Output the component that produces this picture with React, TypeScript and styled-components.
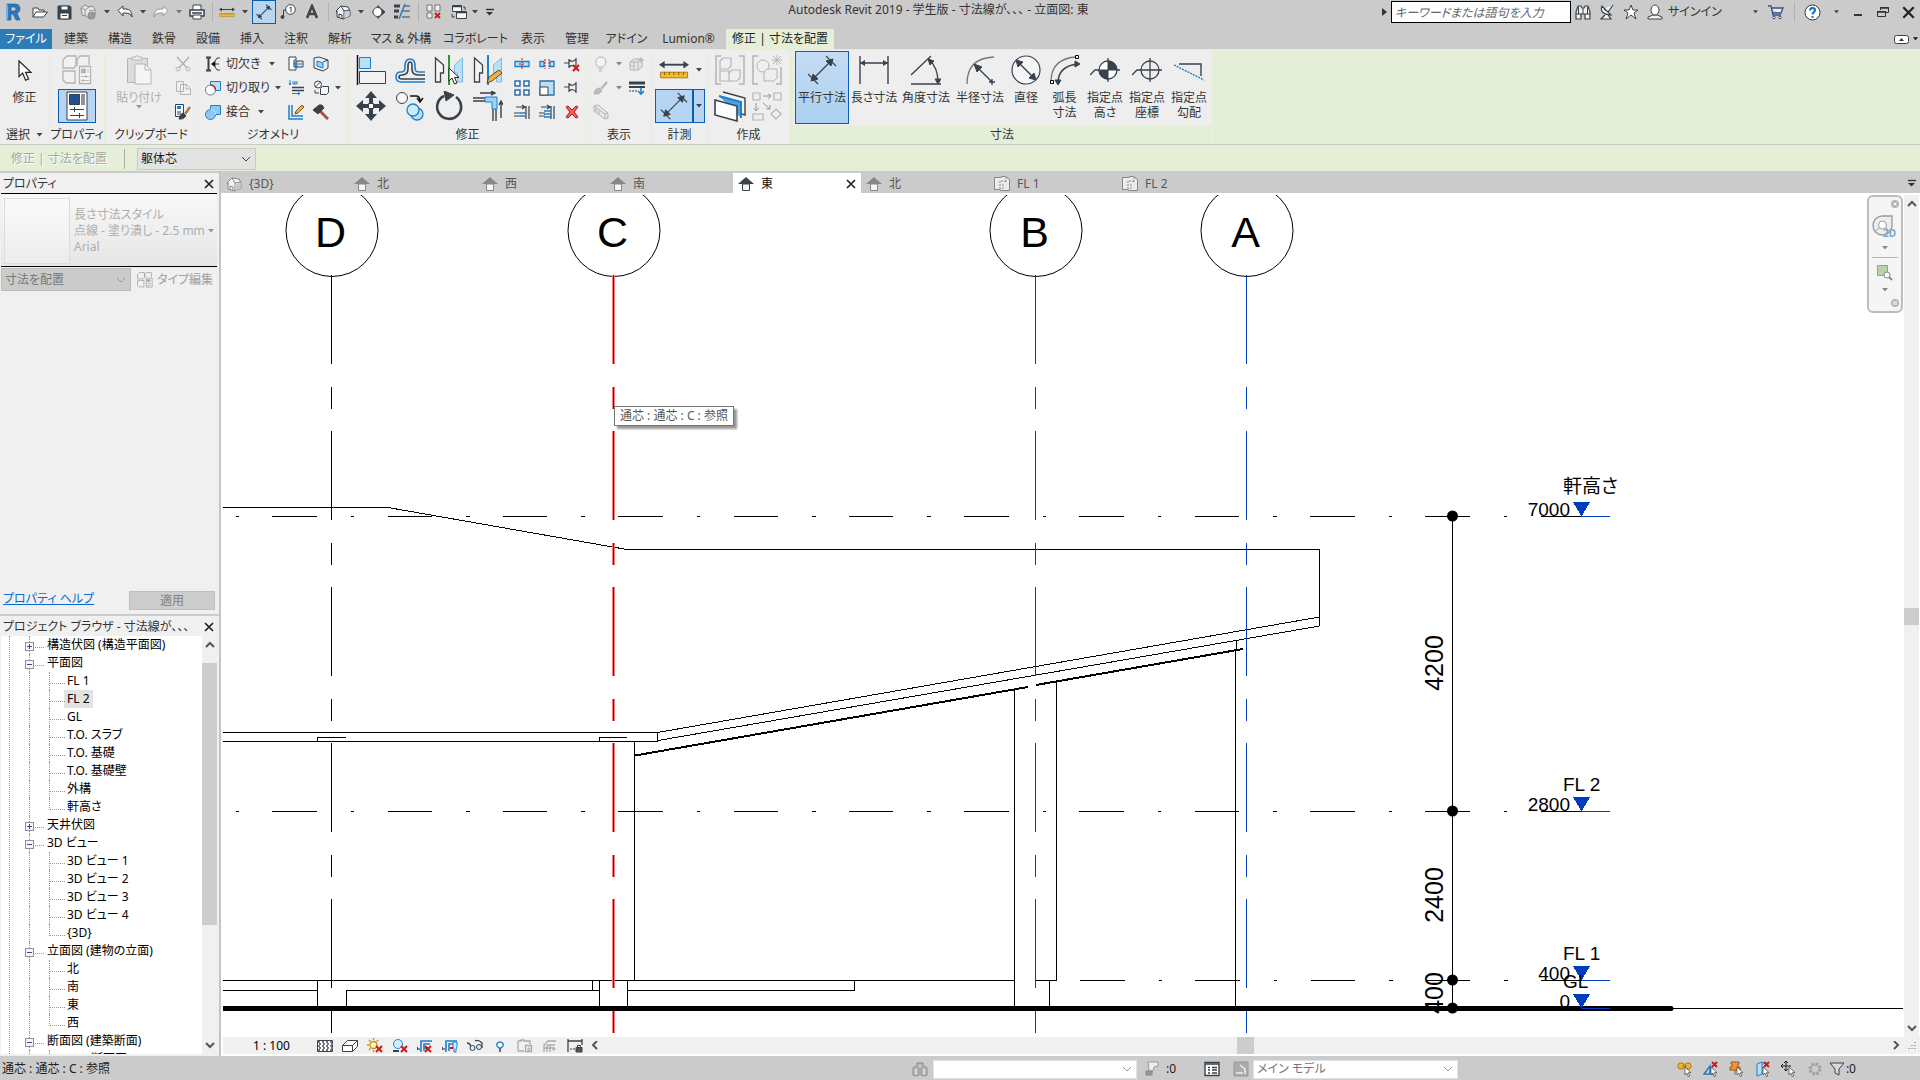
import React from "react";
import styled, { createGlobalStyle, css } from "styled-components";

const INK = "#38424d";
const BLUE = "#1c7fd0";
const SKY = "#b9e0f5";
const GREY = "#b4b4b4";
const GREEN = "#e5efd8";
const BAR = "#cbcbcb";
const RED = "#d01818";

const Global = createGlobalStyle`
  * { box-sizing: border-box; }
  html, body { margin: 0; height: 100%; }
  body {
    background: ${BAR};
    color: #333;
    font-family: "Noto Sans", "Noto Sans CJK JP", sans-serif;
    font-feature-settings: "palt";
    font-size: 12px;
    line-height: 16px;
    overflow: hidden;
  }
  button, input, select {
    font: inherit;
    font-feature-settings: inherit;
    color: inherit;
    margin: 0;
    padding: 0;
    border: 0;
    border-radius: 0;
    background: none;
    outline: none;
  }
  svg { display: block; flex: none; }
`;

/* ---------- layout ---------- */

const Page = styled.div`
  display: flex;
  flex-direction: column;
  height: 100vh;
`;

const TitleBar = styled.header`
  display: flex;
  height: 24px;
  margin-bottom: 5px;
  flex: none;
`;

const AppTitle = styled.h1`
  flex: 1;
  margin: 0;
  font-size: 12px;
  line-height: 20px;
  font-weight: 400;
  text-align: center;
  white-space: nowrap;
  overflow: hidden;
`;

const Slot = styled.button<{ $w: number; $on?: boolean }>`
  flex: none;
  width: ${(p) => p.$w}px;
  display: flex;
  align-items: center;
  justify-content: center;
  ${(p) =>
    p.$on &&
    css`
      background: #b7d6f2;
      border: 1px solid #0a5fb4;
      margin-left: 2px;
    `}
`;

const BarRule = styled.span<{ $w: number }>`
  flex: none;
  width: ${(p) => p.$w}px;
  display: flex;
  justify-content: center;
  padding: 2px 0;
  &::before {
    content: "";
    width: 1px;
    background: #b2b2b2;
  }
`;

const Search = styled.input`
  width: 180px;
  height: 22px;
  margin: 1px 0 0 2px;
  padding: 0 3px;
  background: #fff;
  border: 1px solid #000;
  font-style: italic;
  &::placeholder {
    color: #666;
    opacity: 1;
  }
`;

const SignIn = styled.button`
  width: 105px;
  display: flex;
  align-items: center;
  gap: 5px;
  padding-left: 4px;
  white-space: nowrap;
`;

const RibbonTabs = styled.nav`
  display: flex;
  height: 20px;
  flex: none;
`;

const RibbonTab = styled.button<{ $w: number; $kind?: "file" | "active" }>`
  width: ${(p) => p.$w}px;
  flex: none;
  white-space: nowrap;
  text-align: center;
  ${(p) => p.$kind === "file" && "background:#2b7cb7;color:#fff;margin-right:2px;"}
  ${(p) => p.$kind === "active" && `background:${GREEN};color:#222;margin-left:3px;`}
`;

const RibbonToggle = styled.button`
  display: flex;
  align-items: center;
  gap: 4px;
  margin-left: auto;
  padding-right: 2px;
`;

const Ribbon = styled.section`
  display: flex;
  gap: 1px;
  height: 96px;
  flex: none;
  padding-top: 1px;
  background: ${GREEN};
  border-bottom: 1px solid #c8cbc4;
`;

const Panel = styled.div<{ $w: number }>`
  width: ${(p) => p.$w}px;
  flex: none;
  display: flex;
  flex-direction: column;
  background: #eee;
`;

const ContextPanel = styled(Panel)`
  margin-left: 3px;
  border-right: 1px solid #eee;
`;

const PanelBody = styled.div<{ $pad?: number }>`
  height: 75px;
  display: flex;
  padding-left: ${(p) => p.$pad ?? 0}px;
`;

const PanelTitle = styled.div<{ $context?: boolean }>`
  height: 19px;
  line-height: 18px;
  display: flex;
  align-items: center;
  justify-content: center;
  gap: 6px;
  white-space: nowrap;
  ${(p) => p.$context && `background:${GREEN};`}
`;

const LargeGrid = styled.div<{ $cols: number; $w: number }>`
  display: grid;
  grid-template-columns: repeat(${(p) => p.$cols}, ${(p) => p.$w}px);
  grid-template-rows: 39px 34px;
`;

const SmallGrid = styled.div<{ $cols: string; $left?: number }>`
  display: grid;
  grid-template-columns: ${(p) => p.$cols};
  grid-template-rows: repeat(3, 24px);
  padding-top: 2px;
  margin-left: ${(p) => p.$left ?? 0}px;
`;

const Tool = styled.button<{ $on?: boolean }>`
  display: flex;
  align-items: center;
  justify-content: center;
  ${(p) => p.$on && "background:#b5d5f2;border:1px solid #0a5fb4;"}
`;

const LabelTool = styled.button`
  display: flex;
  align-items: center;
  gap: 5px;
  padding-left: 2px;
  white-space: nowrap;
`;

const TallTool = styled.button<{ $w: number; $on?: boolean; $off?: boolean }>`
  width: ${(p) => p.$w}px;
  height: 73px;
  margin-top: 1px;
  padding-top: 3px;
  display: flex;
  flex-direction: column;
  align-items: center;
  line-height: 15px;
  white-space: pre;
  color: ${(p) => (p.$off ? "#b0b0b0" : "inherit")};
  border: 1px solid ${(p) => (p.$on ? "#0a5fb4" : "transparent")};
  ${(p) => p.$on && "background:linear-gradient(#c4dcf4,#abd0f0);"}
  & > svg:first-child {
    margin-bottom: 5px;
  }
`;

const OptionsBar = styled.div`
  display: flex;
  align-items: center;
  height: 26px;
  flex: none;
  background: ${GREEN};
  padding: 1px 0 0 11px;
`;

const ModeLabel = styled.span`
  width: 114px;
  color: #a3a8a0;
  text-shadow: 1px 1px 0 #fff;
  border-right: 1px solid #a8ada4;
  line-height: 20px;
  margin-right: 12px;
`;

const PickBox = styled.span<{ $w: number; $bg: string; $edge: string; $h: number }>`
  position: relative;
  flex: none;
  width: ${(p) => p.$w}px;
  height: ${(p) => p.$h}px;
  background: ${(p) => p.$bg};
  border: 1px solid ${(p) => p.$edge};
  & > svg {
    position: absolute;
    right: 4px;
    top: 50%;
    margin-top: -4px;
    pointer-events: none;
  }
`;

const Pick = styled.select<{ $tone?: string }>`
  appearance: none;
  width: 100%;
  height: 100%;
  padding: 0 18px 0 3px;
  color: ${(p) => p.$tone ?? "#222"};
  opacity: 1;
`;

const Workspace = styled.div`
  flex: 1;
  min-height: 0;
  display: flex;
`;

const Side = styled.aside`
  width: 221px;
  flex: none;
  display: flex;
  flex-direction: column;
  padding-top: 2px;
  border-right: 2px solid #c4c4c4;
  background: ${BAR};
`;

const Palette = styled.section<{ $grow: number }>`
  flex: ${(p) => p.$grow} 1 0;
  min-height: 0;
  display: flex;
  flex-direction: column;
  background: #f0f0f0;
  margin-bottom: ${(p) => (p.$grow === 441 ? 2 : 0)}px;
`;

const PaletteHead = styled.h2`
  display: flex;
  align-items: center;
  justify-content: space-between;
  height: 20px;
  flex: none;
  margin: 0;
  padding: 1px 5px 0 3px;
  font-size: 12px;
  font-weight: 400;
  white-space: nowrap;
`;

const TypeCard = styled.button`
  display: flex;
  align-items: center;
  height: 74px;
  flex: none;
  margin: 0 2px 0 1px;
  padding: 4px 2px 2px 3px;
  text-align: left;
  color: #adadad;
  white-space: nowrap;
  border-top: 1px solid #000;
  border-bottom: 1px solid #000;
  background: linear-gradient(#f8f8f8, #e6e6e6);
  & > svg {
    margin-left: auto;
  }
`;

const TypeThumb = styled.span`
  width: 66px;
  height: 66px;
  margin-right: 4px;
  border: 1px solid #dcdcdc;
  background: linear-gradient(#fafafa, #ececec);
`;

const FilterRow = styled.div`
  display: flex;
  align-items: center;
  gap: 6px;
  padding: 1px 0 0 1px;
  color: #a0a0a0;
`;

const EditType = styled.button`
  display: flex;
  align-items: center;
  gap: 4px;
  white-space: nowrap;
`;

const PaletteFoot = styled.div`
  display: flex;
  justify-content: space-between;
  margin-top: auto;
  padding: 0 4px 4px 3px;
`;

const HelpLink = styled.a`
  color: #0a68d0;
  text-decoration: underline;
`;

const Apply = styled.button`
  width: 86px;
  height: 19px;
  background: #ccc;
  border: 1px solid #bfbfbf;
  color: #838383;
`;

const TreeArea = styled.div`
  flex: 1;
  min-height: 0;
  display: flex;
  margin: 0 2px 2px 1px;
  background: #fff;
`;

const Tree = styled.ul`
  flex: 1;
  margin: 0 0 0 8px;
  padding: 0;
  list-style: none;
  overflow: hidden;
  color: #000;
  border-left: 1px dotted #999;
`;

const Node = styled.li<{ $leaf?: boolean }>`
  position: relative;
  display: flex;
  align-items: center;
  height: 18px;
  white-space: nowrap;
  padding-left: ${(p) => (p.$leaf ? 54 : 34)}px;
  &::before {
    content: "";
    position: absolute;
    left: 19px;
    top: 0;
    bottom: 0;
    border-left: 1px dotted #999;
  }
  &::after {
    content: "";
    position: absolute;
    left: ${(p) => (p.$leaf ? 39 : 25)}px;
    width: ${(p) => (p.$leaf ? 15 : 9)}px;
    top: 0;
    height: 11px;
    border-bottom: 1px dotted #999;
    ${(p) => p.$leaf && "border-left:1px dotted #999;"}
  }
`;

const Rail = styled.span`
  position: absolute;
  left: 39px;
  top: 11px;
  height: 7px;
  border-left: 1px dotted #999;
`;

const NodeName = styled.span<{ $on?: boolean }>`
  padding: 0 3px;
  line-height: 18px;
  background: ${(p) => (p.$on ? "#e2e2e2" : "transparent")};
`;

const Expander = styled.button`
  position: absolute;
  z-index: 1;
  left: 15px;
  top: 6px;
  width: 9px;
  height: 9px;
  background: #f7f7f7;
  border: 1px solid #919191;
`;

const Scroll = styled.div<{ $dir: "row" | "column"; $before: number; $thumb: number; $after: number }>`
  display: flex;
  flex: ${(p) => (p.$dir === "row" ? "1" : "none")};
  flex-direction: ${(p) => p.$dir};
  align-items: center;
  background: #f0f0f0;
  ${(p) => p.$dir === "column" && "width:15px;"}
  &::before {
    content: "";
    order: 1;
    flex: ${(p) => p.$before} 1 0;
  }
  &::after {
    content: "";
    order: 3;
    flex: ${(p) => p.$after} 1 0;
  }
  & > i {
    order: 2;
    background: #cdcdcd;
    align-self: stretch;
    flex: ${(p) => p.$thumb} 1 0;
  }
  & > button:last-child {
    order: 4;
  }
`;

const Arrow = styled.button`
  width: 15px;
  height: 17px;
  display: flex;
  align-items: center;
  justify-content: center;
`;

const Main = styled.main`
  flex: 1;
  min-width: 0;
  display: flex;
  flex-direction: column;
`;

const DocTabs = styled.nav`
  display: flex;
  height: 22px;
  flex: none;
  padding-top: 2px;
`;

const DocTab = styled.button<{ $on?: boolean }>`
  width: 128px;
  display: flex;
  align-items: center;
  gap: 7px;
  padding: 1px 5px 0 5px;
  color: ${(p) => (p.$on ? "#111" : "#555")};
  background: ${(p) => (p.$on ? "#fff" : "transparent")};
  & > svg:nth-of-type(2) {
    margin-left: auto;
  }
`;

const TabMenu = styled.button`
  margin-left: auto;
  padding-right: 4px;
`;

const ViewRow = styled.div`
  flex: 1;
  min-height: 0;
  display: flex;
  background: #fff;
  padding: 2px 1px 0 2px;
`;

const Canvas = styled.div`
  position: relative;
  flex: 1;
  min-width: 0;
  overflow: hidden;
  & > svg {
    width: 100%;
    height: 100%;
  }
`;

const Tip = styled.div`
  position: absolute;
  left: 391px;
  top: 211px;
  height: 20px;
  padding: 0 5px;
  line-height: 17px;
  background: #fff;
  border: 1px solid #767676;
  box-shadow: 3px 3px 2px #999;
  color: #575757;
  white-space: nowrap;
`;

const NavBar = styled.div`
  position: absolute;
  right: 1px;
  top: 0;
  width: 36px;
  height: 118px;
  display: flex;
  flex-direction: column;
  align-items: center;
  justify-content: space-between;
  padding: 3px 2px 4px;
  background: #f5f5f5;
  border: 2px solid #bdbdbd;
  border-radius: 6px;
  & > button:first-child,
  & > button:last-child {
    align-self: flex-end;
  }
  & > hr {
    width: 26px;
    margin: 0;
    border: 0;
    border-top: 1px solid #b5b5b5;
  }
`;

const ViewBar = styled.div`
  display: flex;
  height: 19px;
  flex: none;
  background: #f0f0f0;
  border-bottom: 2px solid #fff;
  border-left: 2px solid #fff;
`;

const Scale = styled.button`
  width: 89px;
  padding-left: 8px;
  color: #000;
  white-space: pre;
`;

const StatusBar = styled.footer`
  display: flex;
  align-items: center;
  height: 24px;
  flex: none;
  padding: 2px 64px 0 2px;
  color: #222;
`;

const StatusText = styled.span`
  width: 896px;
  flex: 0 1 auto;
  min-width: 120px;
  white-space: pre;
`;

const Push = styled.span`
  flex: 1;
`;

const Count = styled.span`
  flex: none;
  width: 30px;
`;

/* ---------- icons ---------- */

type IcProps = { w?: number; h?: number; vb?: string; children: React.ReactNode };
const Ic = ({ w = 16, h = w, vb, children }: IcProps) => (
  <svg width={w} height={h} viewBox={vb ?? `0 0 ${w} ${h}`} fill="none" stroke={INK} strokeWidth="1" aria-hidden="true">
    {children}
  </svg>
);

const Caret = ({ c = "#444", w = 6 }: { c?: string; w?: number }) => (
  <svg width={w} height={4} viewBox="0 0 6 4" aria-hidden="true">
    <path d="M0 0h6L3 3.5z" fill={c} />
  </svg>
);
const Chevron = ({ dir = "down", c = "#555" }: { dir?: "down" | "up" | "left" | "right"; c?: string }) => {
  const d = { down: "M1 2l4 4 4-4", up: "M1 7l4-4 4 4", left: "M7 0L3 4l4 4", right: "M3 0l4 4-4 4" }[dir];
  return (
    <svg width="10" height="9" viewBox="0 0 10 9" fill="none" stroke={c} strokeWidth={c === "#555" ? 2 : 1} aria-hidden="true">
      <path d={d} />
    </svg>
  );
};
const Cross = ({ s = 10 }: { s?: number }) => (
  <Ic w={s} vb="0 0 10 10">
    <path d="M1 1l8 8M9 1L1 9" stroke="#222" strokeWidth="1.7" />
  </Ic>
);
const MenuCaret = () => (
  <Ic w={9} h={8}>
    <path d="M1 1.500h8" stroke="#333" strokeWidth="1.400" />
    <path d="M1 4h7L4.500 7.500z" fill="#333" stroke="none" />
  </Ic>
);
const Cursor = ({ x = 0, y = 0, k = 1 }: { x?: number; y?: number; k?: number }) => (
  <path transform={`translate(${x} ${y}) scale(${k})`} d="M0 0v13l3-3 2.500 6 2.500-1-2.500-5.500h4.500z" fill="#fff" stroke="#222" />
);
const RedX = ({ x, y, s = 6 }: { x: number; y: number; s?: number }) => (
  <path d={`M${x} ${y}l${s} ${s}M${x + s} ${y}l${-s} ${s}`} stroke={RED} strokeWidth="2" />
);

const Logo = () => (
  <Ic w={16} h={18}>
    <path d="M2 1h8q5 0 5 5 0 3-3 4l3 7h-4l-3-6H6v6H2z M6 4v4h3q2 0 2-2t-2-2z" fill="#2f78bd" fillRule="evenodd" stroke="#1b5590" strokeWidth=".6" />
    <path d="M2 1l-1 2v14l2-1V3z" fill="#6fb2e6" stroke="none" />
  </Ic>
);
const OpenI = () => (
  <Ic>
    <path d="M1 13V4h5l1 2h5v2" fill="#f4f4f4" />
    <path d="M1 13l3-5h11.500l-4 5z" fill="#fff" />
  </Ic>
);
const SaveI = () => (
  <Ic w={15}>
    <path d="M1 1h12l1 1v12H1z" fill={INK} />
    <path d="M4 1h7v4H4zM3 8h9v6H3z" fill="#fff" />
    <path d="M5 10.500h5" />
  </Ic>
);
const SyncI = () => (
  <Ic>
    <path d="M1 4l4-3 4 2 3-1 3 3v6l-5 4-4-3-4-1z" fill="#e4e4e4" stroke="#8b8b8b" />
    <path d="M1 4l4 2 4-3M5 6v6M9 6l3 1 3-2" stroke="#999" />
    <circle cx="11.500" cy="11.500" r="3.500" fill="#9c9c9c" stroke="#888" />
  </Ic>
);
const UndoI = ({ c = INK, flip = false }: { c?: string; flip?: boolean }) => (
  <Ic>
    <path transform={flip ? "matrix(-1 0 0 1 16 0)" : undefined} d="M1 6.500L6 2v3h3q6 0 6 8-1-4-6-4H6v3z" fill="#fafafa" stroke={c} />
  </Ic>
);
const PrintI = () => (
  <Ic>
    <path d="M4 6V1h8v5" fill="#fff" />
    <path d="M1 6h14v6H1z" fill="#f7f7f7" strokeWidth="1.500" />
    <path d="M4 11h8v4H4z" fill="#fff" />
    <path d="M3 9h10" strokeWidth="1.500" />
  </Ic>
);
const MeasureI = ({ w = 16 }: { w?: number }) => (
  <Ic w={w} h={w * 0.625} vb="0 0 32 20">
    <path d="M2 5h28" strokeWidth="2" />
    <path d="M0 5l6-4v8zM32 5l-6-4v8z" fill={INK} stroke="none" />
    <path d="M1.500 13h29v6h-29z" fill="#f3bb2c" stroke="#a87a10" />
    <path d="M6 13v3M11 13v3M16 13v3M21 13v3M26 13v3" stroke="#7a5607" />
  </Ic>
);
const AlignedI = ({ w = 30 }: { w?: number }) => (
  <Ic w={w} vb="0 0 30 30">
    <path d="M5 25L25 5M1 19l10 10M19 1l10 10" strokeWidth={w < 20 ? 2 : 1.2} />
    <path d="M4 26l2-7 5 5zM26 4l-2 7-5-5z" fill={INK} stroke={INK} />
  </Ic>
);
const TagI = () => (
  <Ic>
    <circle cx="10.500" cy="5.500" r="4.800" fill="#fff" />
    <path d="M9.500 4l1.500-1v5.500M6 6H3.500v7" />
    <circle cx="2.500" cy="13" r="1.500" fill={INK} />
  </Ic>
);
const TextI = () => (
  <Ic>
    <path d="M3 14L8 2l5 12M4.500 10h7" stroke="#444" strokeWidth="2.600" />
  </Ic>
);
const HouseI = ({ c = INK }: { c?: string }) => (
  <Ic>
    <path d="M1 7l5-5 7 1 2 4v5l-7 3-6-2V8z" fill="#f3f3f3" stroke={c} />
    <path d="M6 2l3 5v8M9 7l6-1M1 7l2 1M4 14v-4l3 1v4" stroke={c} />
    <path d="M9.500 8l5-1.500V12l-5 2.500z" fill="#c8cdd2" stroke="none" />
  </Ic>
);
const SectionI = () => (
  <Ic>
    <path d="M8 1v14M2 8h13" strokeWidth=".8" />
    <path d="M8 2l7 6-7 6z" fill={INK} />
    <circle cx="7.500" cy="8" r="4.500" fill="#fff" />
  </Ic>
);
const ThinI = () => (
  <Ic>
    <path d="M0 2h6M0 7h5M0 13h4" strokeWidth="3" />
    <path d="M10 2h6M9 7h7M8 13h8" strokeWidth="1" />
    <path d="M11 0L5 15" stroke={BLUE} strokeWidth="1.500" />
  </Ic>
);
const CloseWinI = () => (
  <Ic>
    <path d="M1 1h5v6H1zM1 9h5v5H1zM9 1h5v6H9z" fill="#f0f0f0" stroke="#777" />
    <RedX x={9} y={9} s={5} />
  </Ic>
);
const SwitchI = () => (
  <Ic>
    <path d="M1.500 1.500h9v6h-9zM5.500 7.500h10v7h-10z" fill="#f8f8f8" />
    <path d="M2 2.500h9M6 8.500h9" strokeWidth="1.500" />
    <path d="M12 3h2v3M1 10v3h3" />
  </Ic>
);
const BinocularsI = () => (
  <Ic>
    <path d="M1 15V8l2-6h3l1 2h2l1-2h3l2 6v7h-5v-5H6v5z" fill="#f0f0f0" strokeWidth="1.200" />
    <path d="M1 10h5M10 10h5M8 4v6M3.500 3v7M12.500 3v7" />
  </Ic>
);
const DishI = () => (
  <Ic>
    <path d="M3 2Q0 10 12 11zM5 5l4 3 5-7M6 11l-4 4h10l-3-4" fill="#f5f5f5" strokeWidth="1.200" />
  </Ic>
);
const StarI = () => (
  <Ic>
    <path d="M8 1l2 5h5l-4 3 2 6-5-4-5 4 2-6-4-3h5z" fill="#fff" />
  </Ic>
);
const UserI = () => (
  <Ic>
    <path d="M1 15v-2l5-2h4l5 2v2z" fill="#f5f5f5" />
    <ellipse cx="8" cy="6" rx="4" ry="5" fill="#fff" />
  </Ic>
);
const CartI = () => (
  <Ic>
    <path d="M0 2h3l2 9h8M4 4h11l-2 5H5" stroke="#35507e" fill="#e8edf5" strokeWidth="1.300" />
    <circle cx="6" cy="13.500" r="1.300" fill="#fff" stroke="#35507e" />
    <circle cx="12" cy="13.500" r="1.300" fill="#fff" stroke="#35507e" />
  </Ic>
);
const HelpI = () => (
  <Ic w={17}>
    <circle cx="8.500" cy="8.500" r="7.500" fill="#fff" stroke="#333" />
    <path d="M6 6.500q0-2.500 2.500-2.500T11 6.300q0 1.200-1.300 2-1.200.7-1.200 2.200M8.500 12v1.800" stroke="#1367bd" strokeWidth="2" />
  </Ic>
);
const PropsBoxes = ({ c = GREY, w = 30 }: { c?: string; w?: number }) => (
  <Ic w={w} vb="0 0 30 30">
    <path d="M1 5l4-4h9v9l-2 3H1zM15 5l3-4h9v9M15 5v6M1 16h12v12H4l-3-3z" fill="#f1f1f1" stroke={c} strokeWidth="1.300" />
    <path d="M17.500 11.500h11v17h-11z" fill="#f8f8f8" stroke={c} strokeWidth="1.300" />
    <path d="M19.500 14h4v4h-4zM26 14v4" fill={c} stroke={c} />
    <path d="M19 21.500h8M19 25.500h8M24 20v3M21 24v3" stroke={c} />
  </Ic>
);
const PropsSheet = () => (
  <Ic w={22} h={30}>
    <path d="M1 1h20v28H1z" fill="#fff" />
    <path d="M3.500 3.500h10v10h-10z" fill="#234f8c" />
    <path d="M15 3h4v11h-4z" fill="#8d949c" stroke="none" />
    <path d="M4 18.500h14M4 24.500h14M8.500 16v5M13.500 22v5" />
  </Ic>
);
const PasteI = () => (
  <Ic w={26} h={30}>
    <path d="M1.500 3.500h20v24h-20z" fill="#dcdcdc" stroke={GREY} />
    <path d="M6 5V2h3q2-3 4 0h3v3z" fill="#eee" stroke={GREY} />
    <path d="M9 9h10l6 6v14H9z" fill="#f5f5f5" stroke={GREY} />
    <path d="M19 9v6h6" stroke={GREY} />
  </Ic>
);
const CutI = () => (
  <Ic>
    <path d="M2 1l10 11M14 1L4 12" stroke={GREY} strokeWidth="1.500" />
    <circle cx="3" cy="13" r="2" stroke={GREY} />
    <circle cx="13" cy="13" r="2" stroke={GREY} />
  </Ic>
);
const CopyI = () => (
  <Ic>
    <path d="M1.500 1.500h7v10h-7zM5.500 4.500h6l4 4v6h-10z" fill="#f0f0f0" stroke={GREY} />
    <path d="M11 5v4h4" stroke={GREY} />
  </Ic>
);
const MatchI = () => (
  <Ic>
    <path d="M.5.500h8v12h-8z" fill="#fff" />
    <path d="M2 2h4v3H2z" fill={BLUE} stroke="none" />
    <path d="M2 8h4M2 10h4" />
    <path d="M4 15q1-5 4-6l3 3q-3 4-7 3z" fill={INK} />
    <path d="M10 10l5-7" strokeWidth="2.500" stroke="#a97b47" />
  </Ic>
);
const CopeI = () => (
  <Ic>
    <path d="M1 1.500h5M1 14.500h5M3.500 1.500v13" strokeWidth="2" />
    <path d="M15 2h-3l-2 3v6l2 3h3M14 8H7" />
    <path d="M6 8l4-3v6z" fill="#111" stroke="none" />
  </Ic>
);
const CutGeoI = () => (
  <Ic>
    <path d="M5.500 1.500h10v9h-10z" fill={SKY} stroke={BLUE} />
    <circle cx="5.500" cy="10" r="5" fill="#fff" stroke="#777" />
    <path d="M5.500 5a5 5 0 0 1 5 5" stroke={RED} strokeWidth="1.500" />
  </Ic>
);
const JoinI = () => (
  <Ic>
    <path d="M5.500 1.500h10v9h-5a5 5 0 1 1-5-5z" fill="#8fc7ee" stroke={BLUE} />
    <path d="M5.500 5.500a5 5 0 0 1 5 5" stroke="#cbe6f8" />
  </Ic>
);
const WallJoinI = () => (
  <Ic>
    <path d="M1 1h7v3H6v7h2v3H1z" fill="#fff" />
    <path d="M8 5h7v6H8z" fill="#e2e5e8" />
    <path d="M14 8H8M10 5L6 8l4 3" stroke={BLUE} strokeWidth="1.200" />
  </Ic>
);
const SplitFaceI = () => (
  <Ic>
    <path d="M1 2l5-1 9 3v8l-5 3-9-3z" fill="#eceff2" />
    <path d="M4 5l6 2v5l-6-2z" fill="#9dd0f0" stroke={BLUE} />
    <path d="M10 6l5-2" />
  </Ic>
);
const BeamJoinI = () => (
  <Ic>
    <path d="M2 0v5M1 3l1 2 1-2M5 1v3h4V1M7 1v3" stroke={BLUE} />
    <path d="M4 7.500h12M4 10.500h12" strokeWidth="1.300" />
    <path d="M4 13.500h8M10 12l2 1.500-2 1.500" stroke={BLUE} />
  </Ic>
);
const DemoI = () => (
  <Ic>
    <circle cx="5" cy="4.500" r="3.500" fill="#fff" />
    <path d="M2.500 7l5-5M2 10v3h4" />
    <path d="M7.500 8.500l2-2h6v6l-2 2h-6z" fill="#f7f7f7" />
  </Ic>
);
const PencilCornerI = () => (
  <Ic>
    <path d="M1 1v14h14M4 1v11h11" stroke={BLUE} strokeWidth="1.500" />
    <path d="M7 10l1-3 6-6 2 2-6 6z" fill="#f0b13a" stroke="#7a5a18" />
  </Ic>
);
const HammerI = () => (
  <Ic>
    <path d="M7 7l8 8" stroke="#a4543f" strokeWidth="3" />
    <path d="M0 6l6-5h3l2 3-6 6z" fill={INK} />
  </Ic>
);
const AlignI = () => (
  <Ic w={30}>
    <path d="M1.500 0v30" stroke="#111" strokeWidth="1.500" />
    <path d="M3.500 2.500h11v11h-11z" fill={SKY} stroke={BLUE} />
    <path d="M3.500 16.500h26v12h-26z" fill="#f2f2f4" />
  </Ic>
);
const OffsetI = () => (
  <Ic w={30}>
    <path d="M30 27H6q-5 0-5-5t5-5q4 0 4-4V11q0-7 5-7t5 7v2q0 4 4 4h6" stroke={BLUE} strokeWidth="1.600" />
    <path d="M30 24H7q-3 0-3-2t3-2q6 0 6-6v-3q0-4 2-4t2 4v3q0 6 6 6h7" strokeWidth="1.600" />
  </Ic>
);
const MirrorI = ({ pick = false }: { pick?: boolean }) => (
  <Ic w={30}>
    <path d="M1.500 3v24h5V18h3V10z" fill="#f4f4f4" strokeWidth="1.300" />
    <path d="M28.500 3v24h-5V18h-3V10z" fill={SKY} stroke="#7cb9df" />
    <path d="M15 0v30" stroke={pick ? "#2d9a2d" : BLUE} strokeWidth="2" />
    {pick ? <Cursor x={15} y={13} /> : <path d="M14 28l2-6 10-7 3 3-10 8z" fill="#f2b33c" stroke="#5d4a22" />}
  </Ic>
);
const MoveI = () => (
  <Ic w={30}>
    <path d="M15 0l6 7h-4v5h-4V7H9zM15 30l6-7h-4v-5h-4v5H9zM0 15l7-6v4h5v4H7v4zM30 15l-7-6v4h-5v4h5v4z" fill={INK} stroke="none" />
    <path d="M12.500 12.500h5v5h-5z" fill="#fff" />
  </Ic>
);
const CopyToolI = () => (
  <Ic w={30}>
    <circle cx="7" cy="7" r="5.500" fill="#fafafa" />
    <path d="M15 5h6q4 0 4 5M22 7l3 4 3-4" stroke="#111" strokeWidth="1.500" />
    <circle cx="22" cy="23" r="6" fill={SKY} stroke={BLUE} strokeWidth="1.300" />
    <circle cx="18" cy="19" r="6" fill="#cdeafa" stroke={BLUE} strokeWidth="1.300" />
  </Ic>
);
const RotateI = () => (
  <Ic w={30}>
    <path d="M22 6a12 12 0 1 1-12-1" strokeWidth="2.600" />
    <path d="M10 0l10 4-8 6z" fill={INK} />
  </Ic>
);
const TrimI = () => (
  <Ic w={30}>
    <path d="M7 2h14M18 0l4 2-4 2M28 27V11M26 14l2-4 2 4" strokeWidth="1.400" />
    <path d="M0 7h12M0 10h12M20 17v13M23 17v13" strokeWidth="1.400" />
    <path d="M12 6h12v12h-5v-7h-7z" fill="#9fd3f5" stroke={BLUE} />
  </Ic>
);
const SplitI = ({ gap = false }: { gap?: boolean }) => (
  <Ic>
    <path d={gap ? "M1 5.500h4v5H1zM11 5.500h4v5h-4z" : "M1 5.500h14v5H1z"} fill={SKY} stroke={BLUE} strokeWidth="1.300" />
    {gap ? <path d="M6 3v10M10 3v10" stroke={RED} strokeDasharray="2 1" /> : <path d="M8 2v12M5 8h6" stroke={RED} strokeDasharray="2 1" />}
  </Ic>
);
const PinI = ({ off = false }: { off?: boolean }) => (
  <Ic>
    <path d="M0 7h5M5 3v9M5 4q4 3 7-1M5 11q4-3 7 1M12 2v11" strokeWidth="1.200" />
    {off && <RedX x={9} y={9} s={6} />}
  </Ic>
);
const ArrayI = () => (
  <Ic>
    <path d="M1 1h5v5H1zM10 1h5v5h-5zM1 10h5v5H1zM10 10h5v5h-5z" fill="#f5fbff" stroke="#2b6da5" strokeWidth="1.500" />
  </Ic>
);
const ScaleI = () => (
  <Ic>
    <path d="M1 1h14v14H1z" fill={SKY} stroke="#2b6da5" strokeWidth="1.300" />
    <path d="M1 7h8v8H1z" fill="#fff" />
  </Ic>
);
const ExtendI = ({ multi = false }: { multi?: boolean }) => (
  <Ic>
    <path d="M2 3h8M8 1l3 2-3 2M12 2v13M15 2v13M0 9h6M0 12h6" strokeWidth="1.200" />
    <path d={multi ? "M5 7h7M5 10h7M5 13h7" : "M6 9h6M6 12h6"} stroke={BLUE} strokeWidth="1.400" />
  </Ic>
);
const DeleteI = () => (
  <Ic>
    <path d="M2 3l2-1 4 4 4-4 2 1-4 5 4 5-2 1-4-4-4 4-2-1 4-5z" fill="#f06060" stroke="#b81515" />
  </Ic>
);
const BulbI = () => (
  <Ic>
    <path d="M5 11Q2 8 3 4q2-4 6-3t4 5q0 3-3 5zM5.500 13h4M6 15h3" fill="#f5f5f5" stroke={GREY} />
  </Ic>
);
const GreyBoxI = () => (
  <Ic>
    <path d="M1 6l4-3h8v8l-4 3H1zM1 6h8v8M9 6l4-3M5 6v8M5 10H1" fill="#e7e7e7" stroke={GREY} />
    <path d="M12 1v6M9 4h6" stroke={GREY} />
  </Ic>
);
const BrushI = () => (
  <Ic>
    <path d="M1 14q1-6 5-6l3 3q-3 4-8 3z" fill="#bbb" stroke={GREY} />
    <path d="M8 9l6-7" stroke={GREY} strokeWidth="2" />
  </Ic>
);
const LinesI = () => (
  <Ic>
    <path d="M0 3h16" strokeWidth="3" />
    <path d="M0 7h16" strokeWidth="2" />
    <path d="M0 11h9" strokeDasharray="2 1" />
    <path d="M12 8v6M9 11l3 3 3-3" stroke={BLUE} strokeWidth="1.600" />
  </Ic>
);
const BeamI = () => (
  <Ic>
    <path d="M1 2l4-1 10 8v5l-3 1L1 7zM1 2l11 8v5M12 10l3-1M3 4v4M6 6v4" fill="#e8e8e8" stroke={GREY} />
  </Ic>
);
const BracketBoxes = () => (
  <Ic w={30}>
    <path d="M6 1H1v28h5M24 1h5v28h-5" stroke={GREY} strokeWidth="1.500" />
    <path d="M5 6l3-3h8v8l-3 3H5zM5 16h9v10H5zM14 18l3-3h8v8l-3 3h-8z" fill="#efefef" stroke={GREY} strokeWidth="1.200" />
  </Ic>
);
const BracketShape = () => (
  <Ic w={30}>
    <path d="M6 1H1v28h5M24 29h5V12" stroke={GREY} strokeWidth="1.500" />
    <circle cx="11" cy="11" r="6" fill="#f0f0f0" stroke={GREY} />
    <path d="M12 17l3-3h10v9l-3 3H12z" fill="#eee" stroke={GREY} />
    <path d="M25 0v10M20 5h10M21 1l8 8M29 1l-8 8" stroke={GREY} />
  </Ic>
);
const SheetsI = () => (
  <Ic w={32}>
    <path d="M9 2l22 6v17l-3-1" fill="#f5f5f5" strokeWidth="1.400" />
    <path d="M5 6l22 6v16" fill="#4fa3e2" stroke={BLUE} strokeWidth="2" />
    <path d="M1 10l22 6v15L1 25z" fill="#fcfcfc" strokeWidth="1.600" />
  </Ic>
);
const FlowI = () => (
  <Ic w={30}>
    <path d="M1 2h7v7H1zM22 2h7v7h-7zM1 23h10v6H1zM24 18l5 5-5 5-5-5z" fill="#efefef" stroke={GREY} strokeWidth="1.200" />
    <path d="M11 5h8M16 3l3 2-3 3M4 12v8M2 17l2 3 3-3M11 12l7 6M18 14v4h-4" stroke="#999" />
  </Ic>
);
const LinearI = () => (
  <Ic w={30}>
    <path d="M1 1v28M29 1v28M1 8h28" strokeWidth="1.400" />
    <path d="M1 8l5-3v6zM29 8l-5-3v6z" fill={INK} stroke="none" />
  </Ic>
);
const AngleI = () => (
  <Ic w={30}>
    <path d="M0 29h30M0 20L20 1M18 4q9 9 9 23" strokeWidth="1.300" />
    <path d="M17 4l6 2-4 4zM27 29l-3-5h6z" fill={INK} />
  </Ic>
);
const RadiusI = () => (
  <Ic w={30}>
    <path d="M2 29Q2 3 29 2" stroke="#777" strokeWidth="1.300" />
    <path d="M10 10l17 17M24 27h6M27 24v6" strokeWidth="1.400" />
    <path d="M9 9l8 3-5 5z" fill={INK} />
  </Ic>
);
const DiameterI = () => (
  <Ic w={30}>
    <circle cx="15" cy="15" r="14" fill="#f5f5f5" strokeWidth="1.200" />
    <path d="M6 6l18 18" strokeWidth="1.400" />
    <path d="M5 5l7 2-5 5zM25 25l-7-2 5-5z" fill={INK} />
  </Ic>
);
const ArcI = () => (
  <Ic w={30}>
    <path d="M1 27Q1 3 27 2" stroke="#777" strokeWidth="1.300" />
    <path d="M8 28Q8 11 28 9" strokeWidth="1.600" />
    <path d="M8 30l-3-5h6zM30 9l-5-3v6z" fill={INK} />
    <path d="M.5 25.500h3v3h-3zM25.500.5h3v3h-3z" fill="#fff" stroke="#000" />
  </Ic>
);
const SpotI = ({ fill = false }: { fill?: boolean }) => (
  <Ic w={30}>
    <path d="M0 20l5-5h25M18 3v24" strokeWidth="1.300" />
    <circle cx="18" cy="15" r="9" fill={fill ? "#fff" : "none"} strokeWidth="1.300" />
    {fill && <path d="M18 15V6a9 9 0 0 1 9 9zM18 15v9a9 9 0 0 1-9-9z" fill={INK} />}
  </Ic>
);
const SlopeI = () => (
  <Ic w={30}>
    <path d="M5 9h22v12" strokeWidth="1.400" />
    <path d="M0 10l30 15" stroke={BLUE} strokeWidth="1.400" strokeDasharray="2 1" />
  </Ic>
);
const ElevI = ({ on = false }: { on?: boolean }) => (
  <Ic>
    <path d="M0 8l8-7 8 7z" fill={on ? INK : "#85898d"} stroke="none" />
    <path d="M4.500 8h7v6.500h-7z" fill="#f5f5f5" stroke={on ? INK : "#85898d"} />
  </Ic>
);
const PlanI = () => (
  <Ic>
    <path d="M.5 1.500h7v-1h4l4 3v11h-9v-1h-6z" fill="#ececec" stroke="#85898d" />
    <path d="M6 13V5h6M9 8v6M12 1v6" stroke="#85898d" strokeDasharray="2 1" />
  </Ic>
);
const WheelI = () => (
  <Ic w={26} h={24}>
    <path d="M10 1h10v10a9.500 9.500 0 1 1-10-10z" fill="#eceff1" stroke="#999" strokeWidth="1.300" />
    <circle cx="10.500" cy="10" r="4" fill="#fff" stroke="#999" />
    <path d="M4 16l3-3M14 13l3 3" stroke="#999" />
    <text x="11" y="22" fontSize="10" fontWeight="700" fill="#7ea5cc" stroke="none">2D</text>
  </Ic>
);
const ZoomI = () => (
  <Ic>
    <path d="M.5.500h10v10H.5z" fill="#b7d3ac" stroke="#87ae78" />
    <circle cx="10" cy="10" r="3" fill="#fff" stroke="#888" />
    <path d="M12 12l3 3" stroke="#888" strokeWidth="2" />
  </Ic>
);
const Dot = ({ d }: { d: string }) => (
  <Ic w={8}>
    <circle cx="4" cy="4" r="4" fill="#b5b5b5" stroke="none" />
    <path d={d} stroke="#fff" />
  </Ic>
);

const VcDetail = () => (
  <Ic>
    <path d="M.5 2.500h15v11H.5z" fill="#fff" />
    <path d="M1 4h14M2 6h14M1 8h14M2 10h14M1 12h14" stroke="#777" strokeWidth="2" strokeDasharray="2 2" />
  </Ic>
);
const VcStyle = () => (
  <Ic>
    <path d="M.5 7.500l5-5h10v6l-5 5H.5zM.5 7.500h10v6M10.500 7.500l5-5" fill="#fff" />
  </Ic>
);
const VcSun = () => (
  <Ic>
    <circle cx="6.500" cy="7" r="3.500" fill="#fff2c4" stroke="#d08a10" strokeWidth="1.300" />
    <path d="M6.500 0v2M6.500 12v2M0 7h2M2 2l1.500 1.500M11 2L9.500 3.500M2 12l1.500-1.500" stroke="#d08a10" strokeWidth="1.300" />
    <RedX x={9} y={8} s={6} />
  </Ic>
);
const VcShadow = () => (
  <Ic>
    <circle cx="6" cy="6" r="4.500" fill="#d7effc" stroke={BLUE} />
    <path d="M1 13h6" strokeWidth="2" />
    <RedX x={9} y={8} s={6} />
  </Ic>
);
const VcCrop = ({ bulb = false }: { bulb?: boolean }) => (
  <Ic>
    <path d="M0 11h3M4 14V3h11M7 13V6h6" stroke={BLUE} strokeWidth="1.600" />
    <path d="M0 9v3M8 10h3" strokeWidth="2" stroke={bulb ? RED : INK} />
    {bulb ? <path d="M11 4h4v5l-1 2v3h-2v-3l-1-2z" fill="#d7effc" stroke={BLUE} /> : <RedX x={8} y={8} s={6} />}
  </Ic>
);
const VcGlasses = () => (
  <Ic>
    <path d="M0 5q3 0 4 4M8 3q3-2 7 2v5" strokeWidth="1.300" />
    <circle cx="5.500" cy="10" r="2.500" fill="#d7effc" />
    <circle cx="12" cy="9" r="2.500" fill="#d7effc" />
  </Ic>
);
const VcBulb = () => (
  <Ic>
    <path d="M7 10Q4 8 5 5.500q3-3 6 0Q12 8 9 10z" fill="#fff" stroke={BLUE} strokeWidth="1.300" />
    <path d="M8 10v4" strokeWidth="2" stroke="#58708a" />
  </Ic>
);
const VcGrey = ({ round = false }: { round?: boolean }) => (
  <Ic>
    <path d={round ? "M2 14V7l4-4h8M5 14V7h8M8 7v7M2 10h10" : "M1 3h3V2h3v1h6v3M1 3v10h6M8.500 7.500h6v6h-6z"} stroke="#aaa" strokeWidth="1.300" />
    <path d="M11 10h2v2h-2z" stroke="#aaa" />
  </Ic>
);
const VcConstraint = () => (
  <Ic>
    <path d="M1 1v13M15 1v6M1 3h14" strokeWidth="1.300" />
    <path d="M3 11h6" strokeDasharray="2 1" />
    <path d="M9 9.500h6v4.500H9z" fill="#555" />
    <path d="M10.500 9V7.500h3V9" />
  </Ic>
);
const SbBag = () => (
  <Ic>
    <path d="M1 7l3-2 3 2v7l-3 1-3-1zM9 7l3-2 3 2v7l-3 1-3-1zM5 5V2h6v3" fill="#bbb" stroke="#888" />
    <path d="M4 8v6M12 8v6" stroke="#eee" />
  </Ic>
);
const SbEdit = () => (
  <Ic>
    <path d="M4 1h10v4l-4 1-1 4H5z" fill="#eee" stroke="#999" />
    <path d="M2 10h6v4H2z" fill="#999" stroke="#888" />
  </Ic>
);
const SbList = () => (
  <Ic>
    <path d="M1 1.500h14v13H1z" fill="#fff" strokeWidth="1.400" />
    <path d="M1 3h14M4 6.500h2M4 9h2M4 12h2M8 6.500h5M8 9h5M8 12h5" strokeWidth="1.300" />
  </Ic>
);
const SbDoor = () => (
  <Ic>
    <path d="M1 1h14v14H1z" fill="#ababab" stroke="#999" />
    <path d="M3 12h7M7 4l5 4v5" stroke="#eee" strokeWidth="1.500" />
  </Ic>
);
const SbSel = ({ kind }: { kind: number }) => (
  <Ic>
    {kind === 0 && <path d="M1 4q0-2 3-2t3 2v2q0 2-3 2T1 6zM8 4q0-2 3-2t3 2v2q0 2-3 2T8 6zM5 5h5" fill="#f2b632" stroke="#a97810" />}
    {kind === 1 && <path d="M1 13l6-8v8zM2 13h9" stroke={BLUE} strokeWidth="1.500" />}
    {kind === 2 && <path d="M2 1h8v2H9v3h2v3H1V6h2V3H2zM6 9v5" fill="#f0963a" stroke="#a85a10" />}
    {kind === 3 && <path d="M2 3l5-2v12l-5 2zM7 2h5" fill={SKY} stroke={BLUE} />}
    {kind === 4 && <path d="M5 0v10M0 5h10M3 2l2-2 2 2M2 3L0 5l2 2M3 8l2 2 2-2" stroke="#222" />}
    {(kind === 1 || kind === 3) && <RedX x={9} y={1} s={5} />}
    <Cursor x={8} y={6} k={0.6} />
  </Ic>
);
const SbGear = () => (
  <Ic>
    <circle cx="8" cy="8" r="5" stroke="#9e9e9e" strokeWidth="3" strokeDasharray="2.400 1.500" />
    <circle cx="8" cy="8" r="4" stroke="#a8a8a8" />
  </Ic>
);
const SbFunnel = () => (
  <Ic>
    <path d="M1 2h14L10 8v6l-4-2V8z" fill="#d8dadd" />
  </Ic>
);

/* ---------- elevation drawing ---------- */

const grids = [
  { name: "D", x: 331.5, tone: "#000" },
  { name: "C", x: 613.5, tone: "#a80000", halo: "#f57c7c" },
  { name: "B", x: 1035.5, tone: "#003cbe" },
  { name: "A", x: 1246.5, tone: "#003cbe" },
];
const levels = [
  { name: "軒高さ", value: "7000", y: 516.5, ty: 493 },
  { name: "FL 2", value: "2800", y: 811.5, ty: 791 },
  { name: "FL 1", value: "400", y: 980.5, ty: 960 },
  { name: "GL", value: "0", y: 1008.5, ty: 988 },
];
const dims = [
  { text: "4200", y: 663 },
  { text: "2400", y: 895 },
  { text: "400", y: 993 },
];
const GRID_DASH = "89 22.500 22.500 22";
const LEVEL_DASH = "44.500 34 3.500 33.300";
const DRAW_FONT = '"Liberation Sans", "Noto Sans CJK JP", sans-serif';

const Drawing = () => (
  <svg role="img" aria-label="立面図: 東">
    <g transform="translate(-223 -195)" fill="none" stroke="#000" strokeWidth="1" fontFamily={DRAW_FONT} shapeRendering="crispEdges">
      {levels.slice(0, 3).map((l, i) => (
        <path key={l.name} d={`M${i === 2 ? 1080 : 157} ${l.y}H1581`} strokeDasharray={LEVEL_DASH} />
      ))}
      <path d="M223 507.500H388L627 549.500H1319.500V626L658 740.500" />
      <path d="M1319.500 617L657.500 732.500M223 732.500H657.500V741.500H223" />
      <path d="M317.500 741V737.500H346M599.500 741V737.500H627M634.500 741V980M1014.500 689V1008M1056.500 682V980M1235.500 650V1008M1236.500 641V650" />
      <path d="M635 755.500L1028 687M1036 685L1243 649" strokeWidth="2" />
      <path d="M223 980.500H1015M1036 980.500H1057M1049.500 980V1008" />
      <path d="M223 990.500H317.500M317.500 980V1008M346.500 1008V990.500H599.500M592.500 980V990M599.500 980V1008M627.500 980V1008M627 990.500H854.500V980" />
      <path d="M1673 1008.500H1903" />
      {grids.map((g) => (
        <g key={g.name}>
          <circle cx={g.x + 0.5} cy="230.500" r="46" fill="#fff" shapeRendering="auto" />
          {g.halo && <path d={`M${g.x} 275V1034`} stroke={g.halo} strokeWidth="3" strokeDasharray={GRID_DASH} />}
          <path d={`M${g.x} 275V1034`} stroke={g.tone} strokeDasharray={GRID_DASH} />
          <text x={g.x - 1} y="247" fontSize="43" textAnchor="middle" fill="#000" stroke="none">
            {g.name}
          </text>
        </g>
      ))}
      <path d="M223 1008.500H1671" strokeWidth="5" />
      <path d="M1668 1008.500H1671" strokeWidth="5" strokeLinecap="round" shapeRendering="auto" />
      <path d="M1452.500 515V1013" />
      {levels.map((l) => (
        <g key={l.name} stroke="none" fill="#000">
          <circle cx="1452.500" cy={l.y - 0.5} r="5.500" shapeRendering="auto" />
          <text x="1563" y={l.ty} fontSize="19">
            {l.name}
          </text>
          <text x="1570" y={l.y - 0.5} fontSize="19" textAnchor="end">
            {l.value}
          </text>
          <path d={`M1573 ${l.y - 14.5}H1590L1581.500 ${l.y}z`} fill="#003cbe" />
          <path d={`M1581 ${l.y}H1610`} stroke="#003cbe" />
        </g>
      ))}
      {dims.map((d) => (
        <text key={d.text} transform={`translate(1443 ${d.y}) rotate(-90)`} fontSize="25" textAnchor="middle" fill="#000" stroke="none">
          {d.text}
        </text>
      ))}
    </g>
  </svg>
);

/* ---------- data ---------- */

const ribbonTabs: [string, number][] = [
  ["建築", 44], ["構造", 44], ["鉄骨", 44], ["設備", 44], ["挿入", 44], ["注釈", 44], ["解析", 44],
  ["マス & 外構", 78], ["コラボレート", 71], ["表示", 44], ["管理", 44], ["アドイン", 55], ["Lumion®", 69],
];

const dimTools: [string, number, React.ReactNode][] = [
  ["平行寸法", 54, <AlignedI />],
  ["長さ寸法", 50, <LinearI />],
  ["角度寸法", 54, <AngleI />],
  ["半径寸法", 54, <RadiusI />],
  ["直径", 38, <DiameterI />],
  ["弧長\n寸法", 39, <ArcI />],
  ["指定点\n高さ", 42, <SpotI fill />],
  ["指定点\n座標", 42, <SpotI />],
  ["指定点\n勾配", 42, <SlopeI />],
];

type TreeItem = { t: string; open?: boolean; leaf?: boolean; on?: boolean };
const leaf = (t: string, on = false): TreeItem => ({ t, leaf: true, on });
const tree: TreeItem[] = [
  { t: "構造伏図 (構造平面図)", open: false },
  { t: "平面図", open: true },
  ...["FL 1", "FL 2", "GL", "T.O. スラブ", "T.O. 基礎", "T.O. 基礎壁", "外構", "軒高さ"].map((t) => leaf(t, t === "FL 2")),
  { t: "天井伏図", open: false },
  { t: "3D ビュー", open: true },
  ...["3D ビュー 1", "3D ビュー 2", "3D ビュー 3", "3D ビュー 4", "{3D}"].map((t) => leaf(t)),
  { t: "立面図 (建物の立面)", open: true },
  ...["北", "南", "東", "西"].map((t) => leaf(t)),
  { t: "断面図 (建築断面)", open: true },
  leaf("　　断面図"),
];

const docTabs: [string, React.ReactNode, boolean?][] = [
  ["{3D}", <HouseI c="#85898d" />],
  ["北", <ElevI />],
  ["西", <ElevI />],
  ["南", <ElevI />],
  ["東", <ElevI on />, true],
  ["北", <ElevI />],
  ["FL 1", <PlanI />],
  ["FL 2", <PlanI />],
];

const viewTools: [string, React.ReactNode][] = [
  ["詳細レベル", <VcDetail />], ["表示スタイル", <VcStyle />], ["太陽の軌跡", <VcSun />], ["影", <VcShadow />],
  ["ビューのトリミング", <VcCrop />], ["トリミング領域", <VcCrop bulb />], ["一時非表示", <VcGlasses />], ["非表示要素", <VcBulb />],
  ["一時的なビュー", <VcGrey />], ["解析モデル", <VcGrey round />], ["拘束", <VcConstraint />],
];

export default function App() {
  return (
    <Page>
      <Global />
      <TitleBar>
        <Slot $w={26} aria-label="Revit"><Logo /></Slot>
        <Slot $w={28} aria-label="開く"><OpenI /></Slot>
        <Slot $w={20} aria-label="保存"><SaveI /></Slot>
        <Slot $w={28} aria-label="同期"><SyncI /></Slot>
        <Slot $w={10} aria-label="同期メニュー"><Caret /></Slot>
        <Slot $w={26} aria-label="元に戻す"><UndoI /></Slot>
        <Slot $w={10} aria-label="元に戻すメニュー"><Caret /></Slot>
        <Slot $w={26} aria-label="やり直し"><UndoI c="#999" flip /></Slot>
        <Slot $w={10} aria-label="やり直しメニュー"><Caret c="#777" /></Slot>
        <Slot $w={26} aria-label="印刷"><PrintI /></Slot>
        <BarRule $w={4} />
        <Slot $w={26} aria-label="計測"><MeasureI /></Slot>
        <Slot $w={10} aria-label="計測メニュー"><Caret /></Slot>
        <Slot $w={24} $on aria-label="平行寸法"><AlignedI w={16} /></Slot>
        <Slot $w={24} aria-label="タグ"><TagI /></Slot>
        <Slot $w={24} aria-label="文字"><TextI /></Slot>
        <BarRule $w={8} />
        <Slot $w={22} aria-label="既定の 3D ビュー"><HouseI /></Slot>
        <Slot $w={14} aria-label="3D メニュー"><Caret /></Slot>
        <Slot $w={20} aria-label="断面"><SectionI /></Slot>
        <Slot $w={28} aria-label="細線"><ThinI /></Slot>
        <BarRule $w={4} />
        <Slot $w={28} aria-label="非アクティブを閉じる"><CloseWinI /></Slot>
        <Slot $w={22} aria-label="ウィンドウ切替"><SwitchI /></Slot>
        <Slot $w={10} aria-label="ウィンドウメニュー"><Caret /></Slot>
        <Slot $w={18} aria-label="カスタマイズ"><MenuCaret /></Slot>
        <AppTitle>Autodesk Revit 2019 - 学生版 - 寸法線が、、、 - 立面図: 東</AppTitle>
        <Slot $w={10} aria-label="検索を折りたたむ">
          <Ic w={5} h={8}><path d="M0 0l5 4-5 4z" fill="#333" stroke="none" /></Ic>
        </Slot>
        <Search placeholder="キーワードまたは語句を入力" aria-label="キーワードまたは語句を入力" />
        <Slot $w={24} aria-label="検索"><BinocularsI /></Slot>
        <Slot $w={23} aria-label="通信センター"><DishI /></Slot>
        <Slot $w={25} aria-label="お気に入り"><StarI /></Slot>
        <SignIn><UserI />サインイン</SignIn>
        <Slot $w={14} aria-label="アカウントメニュー"><Caret w={5} /></Slot>
        <Slot $w={28} aria-label="ストア"><CartI /></Slot>
        <BarRule $w={8} />
        <Slot $w={28} aria-label="ヘルプ"><HelpI /></Slot>
        <Slot $w={20} aria-label="ヘルプメニュー"><Caret w={5} /></Slot>
        <Slot $w={24} aria-label="最小化"><Ic w={8} h={8}><path d="M0 7h8" strokeWidth="2" stroke="#333" /></Ic></Slot>
        <Slot $w={26} aria-label="元のサイズに戻す">
          <Ic w={12}><path d="M3.500 4V1.500h8v5H9M.5 5.500h8v5h-8z" stroke="#333" /><path d="M3 2h9M0 6h9" stroke="#333" strokeWidth="1.500" /></Ic>
        </Slot>
        <Slot $w={24} aria-label="閉じる"><Cross s={13} /></Slot>
      </TitleBar>

      <RibbonTabs>
        <RibbonTab $w={52} $kind="file">ファイル</RibbonTab>
        {ribbonTabs.map(([t, w]) => (
          <RibbonTab key={t} $w={w}>{t}</RibbonTab>
        ))}
        <RibbonTab $w={108} $kind="active">修正 | 寸法を配置</RibbonTab>
        <RibbonToggle aria-label="リボンを最小化">
          <Ic w={15} h={9}><rect x=".5" y=".5" width="14" height="8" rx="2" fill="#fff" /><path d="M5 6l2.500-3L10 6z" fill="#333" stroke="none" /></Ic>
          <Caret w={5} c="#111" />
        </RibbonToggle>
      </RibbonTabs>

      <Ribbon>
        <Panel $w={49}>
          <PanelBody>
            <TallTool $w={49}>
              <Ic w={30}><Cursor x={9} y={6} k={1.2} /></Ic>
              修正
            </TallTool>
          </PanelBody>
          <PanelTitle>選択 <Caret w={7} /></PanelTitle>
        </Panel>
        <Panel $w={54}>
          <PanelBody $pad={8}>
            <LargeGrid $cols={1} $w={38}>
              <Tool aria-label="タイプ プロパティ"><PropsBoxes /></Tool>
              <Tool $on aria-label="プロパティ"><PropsSheet /></Tool>
            </LargeGrid>
          </PanelBody>
          <PanelTitle>プロパティ</PanelTitle>
        </Panel>
        <Panel $w={92}>
          <PanelBody $pad={7}>
            <TallTool $w={54} $off><PasteI />貼り付け<Caret c="#999" /></TallTool>
            <SmallGrid $cols="24px" $left={5}>
              <Tool aria-label="切り取り"><CutI /></Tool>
              <Tool aria-label="コピー"><CopyI /></Tool>
              <Tool aria-label="タイプのプロパティを一致"><MatchI /></Tool>
            </SmallGrid>
          </PanelBody>
          <PanelTitle>クリップボード</PanelTitle>
        </Panel>
        <Panel $w={150}>
          <PanelBody $pad={5}>
            <SmallGrid $cols="80px 26px 24px 10px">
              <LabelTool><CopeI />切欠き&nbsp;<Caret /></LabelTool>
              <Tool aria-label="壁結合"><WallJoinI /></Tool>
              <Tool aria-label="面分割"><SplitFaceI /></Tool>
              <span />
              <LabelTool><CutGeoI />切り取り<Caret /></LabelTool>
              <Tool aria-label="梁結合"><BeamJoinI /></Tool>
              <Tool aria-label="ペイント"><DemoI /></Tool>
              <Tool aria-label="ペイントメニュー"><Caret /></Tool>
              <LabelTool><JoinI />接合&nbsp;<Caret /></LabelTool>
              <Tool aria-label="壁の結合を編集"><PencilCornerI /></Tool>
              <Tool aria-label="解体"><HammerI /></Tool>
            </SmallGrid>
          </PanelBody>
          <PanelTitle>ジオメトリ</PanelTitle>
        </Panel>
        <Panel $w={237}>
          <PanelBody $pad={2}>
            <LargeGrid $cols={4} $w={39}>
              <Tool aria-label="位置合わせ"><AlignI /></Tool>
              <Tool aria-label="オフセット"><OffsetI /></Tool>
              <Tool aria-label="鏡像化 軸を選択"><MirrorI pick /></Tool>
              <Tool aria-label="鏡像化 軸を描画"><MirrorI /></Tool>
              <Tool aria-label="移動"><MoveI /></Tool>
              <Tool aria-label="複写"><CopyToolI /></Tool>
              <Tool aria-label="回転"><RotateI /></Tool>
              <Tool aria-label="トリム"><TrimI /></Tool>
            </LargeGrid>
            <SmallGrid $cols="25px 25px 25px" $left={2}>
              <Tool aria-label="要素を分割"><SplitI /></Tool>
              <Tool aria-label="ギャップ分割"><SplitI gap /></Tool>
              <Tool aria-label="ピン解除"><PinI off /></Tool>
              <Tool aria-label="配列"><ArrayI /></Tool>
              <Tool aria-label="尺度"><ScaleI /></Tool>
              <Tool aria-label="ピン"><PinI /></Tool>
              <Tool aria-label="単一延長"><ExtendI /></Tool>
              <Tool aria-label="複数延長"><ExtendI multi /></Tool>
              <Tool aria-label="削除"><DeleteI /></Tool>
            </SmallGrid>
          </PanelBody>
          <PanelTitle>修正</PanelTitle>
        </Panel>
        <Panel $w={64}>
          <PanelBody $pad={2}>
            <SmallGrid $cols="24px 12px 24px">
              <Tool aria-label="非表示"><BulbI /></Tool>
              <Tool aria-label="非表示メニュー"><Caret c="#888" /></Tool>
              <Tool aria-label="要素の置き換え"><GreyBoxI /></Tool>
              <Tool aria-label="グラフィックス"><BrushI /></Tool>
              <Tool aria-label="グラフィックスメニュー"><Caret c="#888" /></Tool>
              <Tool aria-label="線種変更"><LinesI /></Tool>
              <Tool aria-label="選択ボックス"><BeamI /></Tool>
            </SmallGrid>
          </PanelBody>
          <PanelTitle>表示</PanelTitle>
        </Panel>
        <Panel $w={55}>
          <PanelBody $pad={3}>
            <LargeGrid $cols={1} $w={38}>
              <Tool aria-label="計測"><MeasureI w={30} /></Tool>
              <Tool $on aria-label="寸法"><AlignedI w={28} /></Tool>
            </LargeGrid>
            <LargeGrid $cols={1} $w={12}>
              <Tool aria-label="計測メニュー"><Caret /></Tool>
              <Tool $on aria-label="寸法メニュー"><Caret /></Tool>
            </LargeGrid>
          </PanelBody>
          <PanelTitle>計測</PanelTitle>
        </Panel>
        <Panel $w={81}>
          <PanelBody $pad={3}>
            <LargeGrid $cols={2} $w={37}>
              <Tool aria-label="アセンブリ"><BracketBoxes /></Tool>
              <Tool aria-label="パーツ"><BracketShape /></Tool>
              <Tool aria-label="グループ"><SheetsI /></Tool>
              <Tool aria-label="類似を作成"><FlowI /></Tool>
            </LargeGrid>
          </PanelBody>
          <PanelTitle>作成</PanelTitle>
        </Panel>
        <ContextPanel $w={419}>
          <PanelBody $pad={2}>
            {dimTools.map(([t, w, icon], i) => (
              <TallTool key={t} $w={w} $on={i === 0}>{icon}{t}</TallTool>
            ))}
          </PanelBody>
          <PanelTitle $context>寸法</PanelTitle>
        </ContextPanel>
      </Ribbon>

      <OptionsBar>
        <ModeLabel>修正 | 寸法を配置</ModeLabel>
        <PickBox $w={119} $h={22} $bg="#e3e3e3" $edge="#c9c9c9">
          <Pick aria-label="配置基準"><option>躯体芯</option></Pick>
          <Chevron c="#444" />
        </PickBox>
      </OptionsBar>

      <Workspace>
        <Side>
          <Palette $grow={441}>
            <PaletteHead>プロパティ<Tool aria-label="プロパティを閉じる"><Cross /></Tool></PaletteHead>
            <TypeCard>
              <TypeThumb />
              <span>長さ寸法スタイル<br />点線 - 塗り潰し - 2.5 mm<br />Arial</span>
              <Caret c="#999" w={8} />
            </TypeCard>
            <FilterRow>
              <PickBox $w={130} $h={23} $bg="#cbcbcb" $edge="#bdbdbd">
                <Pick $tone="#777" aria-label="要素フィルタ"><option>寸法を配置</option></Pick>
                <Chevron c="#999" />
              </PickBox>
              <EditType><PropsBoxes w={16} c="#999" />タイプ編集</EditType>
            </FilterRow>
            <PaletteFoot>
              <HelpLink href="#help">プロパティ ヘルプ</HelpLink>
              <Apply>適用</Apply>
            </PaletteFoot>
          </Palette>
          <Palette $grow={440}>
            <PaletteHead>プロジェクト ブラウザ - 寸法線が、、、<Tool aria-label="ブラウザを閉じる"><Cross /></Tool></PaletteHead>
            <TreeArea>
              <Tree>
                {tree.map((n, i) => (
                  <Node key={i} $leaf={n.leaf}>
                    {!n.leaf && (
                      <Expander aria-label={n.open ? "閉じる" : "展開"}>
                        <Ic w={7}><path d={n.open ? "M1 3.500h5" : "M1 3.500h5M3.500 1v5"} stroke="#2a4fa0" /></Ic>
                      </Expander>
                    )}
                    {n.leaf && tree[i + 1]?.leaf && <Rail />}
                    <NodeName $on={n.on}>{n.t}</NodeName>
                  </Node>
                ))}
              </Tree>
              <Scroll $dir="column" $before={10} $thumb={261} $after={112}>
                <Arrow aria-label="上へ"><Chevron dir="up" /></Arrow>
                <i />
                <Arrow aria-label="下へ"><Chevron /></Arrow>
              </Scroll>
            </TreeArea>
          </Palette>
        </Side>

        <Main>
          <DocTabs>
            {docTabs.map(([t, icon, on], i) => (
              <DocTab key={i} $on={on}>{icon}{t}{on && <Cross />}</DocTab>
            ))}
            <TabMenu aria-label="タブ一覧"><MenuCaret /></TabMenu>
          </DocTabs>
          <ViewRow>
            <Canvas>
              <Drawing />
              <Tip role="tooltip">通芯 : 通芯 : C : 参照</Tip>
              <NavBar>
                <Tool aria-label="ナビゲーションを閉じる"><Dot d="M2.500 2.500l3 3M5.500 2.500l-3 3" /></Tool>
                <Tool aria-label="2D ホイール"><WheelI /></Tool>
                <Tool aria-label="ホイールメニュー"><Caret c="#888" /></Tool>
                <hr />
                <Tool aria-label="ズーム"><ZoomI /></Tool>
                <Tool aria-label="ズームメニュー"><Caret c="#888" /></Tool>
                <Tool aria-label="ナビゲーション設定"><Dot d="M2 3h4M2 5h4" /></Tool>
              </NavBar>
            </Canvas>
            <Scroll $dir="column" $before={396} $thumb={17} $after={395}>
              <Arrow aria-label="上へ"><Chevron dir="up" /></Arrow>
              <i />
              <Arrow aria-label="下へ"><Chevron /></Arrow>
            </Scroll>
          </ViewRow>
          <ViewBar>
            <Scale>1 : 100</Scale>
            {viewTools.map(([label, icon]) => (
              <Slot key={label} $w={25} aria-label={label}>{icon}</Slot>
            ))}
            <Scroll $dir="row" $before={634} $thumb={17} $after={634}>
              <Arrow aria-label="左へ"><Chevron dir="left" /></Arrow>
              <i />
              <Arrow aria-label="右へ"><Chevron dir="right" /></Arrow>
            </Scroll>
            <Slot as="span" $w={17}>
              <Ic w={10}><path d="M8 1v1M8 4v1M5 4v1M8 7v1M5 7v1M2 7v1" stroke="#aaa" strokeWidth="2" /></Ic>
            </Slot>
          </ViewBar>
        </Main>
      </Workspace>

      <StatusBar>
        <StatusText>通芯 : 通芯 : C : 参照</StatusText>
        <BarRule $w={8} />
        <Slot $w={27} aria-label="ワークセット"><SbBag /></Slot>
        <PickBox $w={204} $h={19} $bg="#fff" $edge="#e3e3e3">
          <Pick aria-label="アクティブ ワークセット"><option></option></Pick>
          <Chevron c="#999" />
        </PickBox>
        <Slot $w={29} aria-label="編集リクエスト"><SbEdit /></Slot>
        <Count>:0</Count>
        <Slot $w={32} aria-label="デザイン オプション"><SbList /></Slot>
        <Slot $w={25} aria-label="オプションに追加"><SbDoor /></Slot>
        <PickBox $w={205} $h={19} $bg="#fff" $edge="#e3e3e3">
          <Pick $tone="#777" aria-label="アクティブ オプション"><option>メイン モデル</option></Pick>
          <Chevron c="#999" />
        </PickBox>
        <Push />
        {[0, 1, 2, 3, 4].map((k) => (
          <Slot key={k} $w={26} aria-label={`選択オプション ${k + 1}`}><SbSel kind={k} /></Slot>
        ))}
        <Slot $w={26} aria-label="バックグラウンド処理"><SbGear /></Slot>
        <Slot $w={18} aria-label="フィルタ"><SbFunnel /></Slot>
        <span>:0</span>
      </StatusBar>
    </Page>
  );
}
